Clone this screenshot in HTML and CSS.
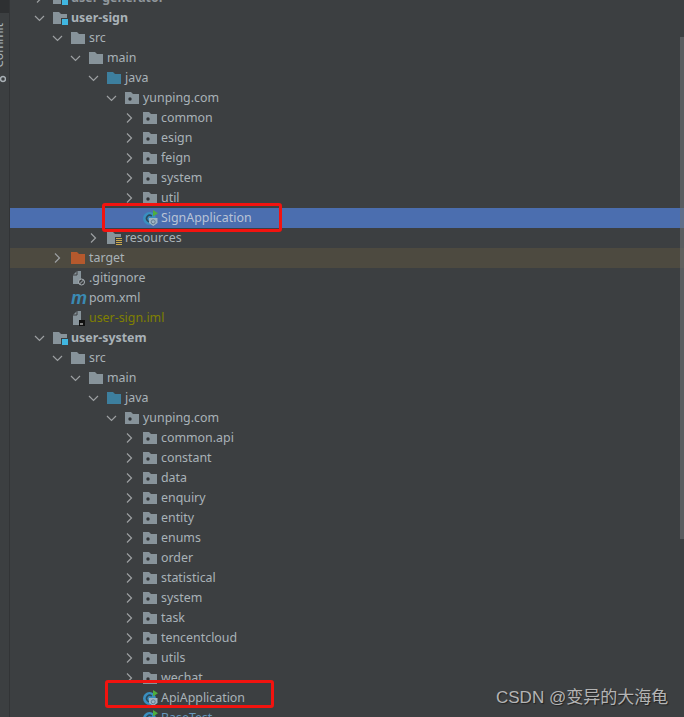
FILE: index.html
```html
<!DOCTYPE html>
<html lang="en">
<head>
<meta charset="utf-8">
<title>Project tree</title>
<link rel="stylesheet" href="styles.css">
</head>
<body>
<svg class="defs" width="0" height="0" aria-hidden="true">
  <symbol id="down" viewBox="0 0 16 16"><path d="M4 6l4.500 4.500L13 6" fill="none" stroke="#9da0a2" stroke-width="1.200"/></symbol>
  <symbol id="right" viewBox="0 0 16 16"><path d="M6 3.500l4.500 4.500L6 12.500" fill="none" stroke="#9da0a2" stroke-width="1.200"/></symbol>
  <symbol id="folder" viewBox="0 0 16 16"><path d="M0 2h6l2 2h6v10H0z" fill="#87939a"/></symbol>
  <symbol id="module" viewBox="0 0 16 16"><path d="M0 2h6l2 2h6v10H0z" fill="#87939a"/><rect x="8" y="8" width="8" height="8" fill="#3c3f41"/><rect x="9" y="9" width="6" height="6" fill="#40b6e0"/></symbol>
  <symbol id="src" viewBox="0 0 16 16"><path d="M0 2h6l2 2h6v10H0z" fill="#3d7f9e"/></symbol>
  <symbol id="target" viewBox="0 0 16 16"><path d="M0 2h6l2 2h6v10H0z" fill="#b5592d"/></symbol>
  <symbol id="pkg" viewBox="0 0 16 16"><path d="M0 2h6l2 2h6v10H0z" fill="#87939a"/><circle cx="5" cy="9" r="1.700" fill="#2f3336"/></symbol>
  <symbol id="res" viewBox="0 0 16 16"><path d="M0 2h6l2 2h6v10H0z" fill="#87939a"/><rect x="8" y="7" width="8" height="9" fill="#3c3f41"/><path d="M9 8.500h6M9 10.500h6M9 12.500h6M9 14.500h6" stroke="#c9a94f" stroke-width="1"/></symbol>
  <symbol id="cls" viewBox="0 0 16 16"><circle cx="6.500" cy="8.500" r="6.500" fill="#3a8fc0"/><path d="M8.800 6A3.200 3.200 0 1 0 8.800 11" fill="none" stroke="#2b4a5c" stroke-width="1.600"/><path d="M10 0l5 3.300L10 6.500z" fill="#4fae3f"/><path d="M6 8h8.500v5l-4.250 3L6 13z" fill="#9fb4c4"/><circle cx="10.200" cy="11.800" r="2" fill="none" stroke="#5f7b90" stroke-width="1"/></symbol>
  <symbol id="ignored" viewBox="0 0 16 16"><path d="M2 5l4-4h4v10l-2 3H2z" fill="#87939a"/><path d="M2 5h4V1" fill="none" stroke="#3c3f41"/><circle cx="10.500" cy="12" r="3" fill="#3c3f41" stroke="#a9b0b5" stroke-width="1"/><path d="M8.500 14l4-4" stroke="#a9b0b5"/></symbol>
  <symbol id="iml" viewBox="0 0 16 16"><path d="M2 5l4-4h4v14H2z" fill="#87939a"/><path d="M2 5h4V1" fill="none" stroke="#3c3f41"/><rect x="8" y="10" width="6" height="6" fill="#111"/><rect x="9" y="13.500" width="3" height="1" fill="#eee"/></symbol>
</svg>

<div class="window">
  <aside class="rail">
    <div class="rail-top"></div>
    <div class="rail-tab">
      <span class="rail-label">Commit</span>
      <svg class="rail-icon" width="10" height="10" viewBox="0 0 10 10"><circle cx="3" cy="5" r="2.500" fill="none" stroke="#a9b0b5" stroke-width="1.500"/><path d="M5.500 5H10" stroke="#a9b0b5" stroke-width="1.500"/></svg>
    </div>
  </aside>

  <main class="tree">
    <div class="row l0"><svg class="chev"><use href="#right"/></svg><svg class="ico"><use href="#module"/></svg><span class="name bold dim">user-generator</span></div>
    <div class="row l0"><svg class="chev"><use href="#down"/></svg><svg class="ico"><use href="#module"/></svg><span class="name bold">user-sign</span></div>
    <div class="row l1"><svg class="chev"><use href="#down"/></svg><svg class="ico"><use href="#folder"/></svg><span class="name">src</span></div>
    <div class="row l2"><svg class="chev"><use href="#down"/></svg><svg class="ico"><use href="#folder"/></svg><span class="name">main</span></div>
    <div class="row l3"><svg class="chev"><use href="#down"/></svg><svg class="ico"><use href="#src"/></svg><span class="name">java</span></div>
    <div class="row l4"><svg class="chev"><use href="#down"/></svg><svg class="ico"><use href="#pkg"/></svg><span class="name">yunping.com</span></div>
    <div class="row l5"><svg class="chev"><use href="#right"/></svg><svg class="ico"><use href="#pkg"/></svg><span class="name">common</span></div>
    <div class="row l5"><svg class="chev"><use href="#right"/></svg><svg class="ico"><use href="#pkg"/></svg><span class="name">esign</span></div>
    <div class="row l5"><svg class="chev"><use href="#right"/></svg><svg class="ico"><use href="#pkg"/></svg><span class="name">feign</span></div>
    <div class="row l5"><svg class="chev"><use href="#right"/></svg><svg class="ico"><use href="#pkg"/></svg><span class="name">system</span></div>
    <div class="row l5"><svg class="chev"><use href="#right"/></svg><svg class="ico"><use href="#pkg"/></svg><span class="name">util</span></div>
    <div class="row l5 selected"><span class="chev"></span><svg class="ico"><use href="#cls"/></svg><span class="name">SignApplication</span></div>
    <div class="row l3"><svg class="chev"><use href="#right"/></svg><svg class="ico"><use href="#res"/></svg><span class="name">resources</span></div>
    <div class="row l1 excluded"><svg class="chev"><use href="#right"/></svg><svg class="ico"><use href="#target"/></svg><span class="name">target</span></div>
    <div class="row l1"><span class="chev"></span><svg class="ico"><use href="#ignored"/></svg><span class="name">.gitignore</span></div>
    <div class="row l1"><span class="chev"></span><span class="ico maven">m</span><span class="name">pom.xml</span></div>
    <div class="row l1"><span class="chev"></span><svg class="ico"><use href="#iml"/></svg><span class="name olive">user-sign.iml</span></div>
    <div class="row l0"><svg class="chev"><use href="#down"/></svg><svg class="ico"><use href="#module"/></svg><span class="name bold">user-system</span></div>
    <div class="row l1"><svg class="chev"><use href="#down"/></svg><svg class="ico"><use href="#folder"/></svg><span class="name">src</span></div>
    <div class="row l2"><svg class="chev"><use href="#down"/></svg><svg class="ico"><use href="#folder"/></svg><span class="name">main</span></div>
    <div class="row l3"><svg class="chev"><use href="#down"/></svg><svg class="ico"><use href="#src"/></svg><span class="name">java</span></div>
    <div class="row l4"><svg class="chev"><use href="#down"/></svg><svg class="ico"><use href="#pkg"/></svg><span class="name">yunping.com</span></div>
    <div class="row l5"><svg class="chev"><use href="#right"/></svg><svg class="ico"><use href="#pkg"/></svg><span class="name">common.api</span></div>
    <div class="row l5"><svg class="chev"><use href="#right"/></svg><svg class="ico"><use href="#pkg"/></svg><span class="name">constant</span></div>
    <div class="row l5"><svg class="chev"><use href="#right"/></svg><svg class="ico"><use href="#pkg"/></svg><span class="name">data</span></div>
    <div class="row l5"><svg class="chev"><use href="#right"/></svg><svg class="ico"><use href="#pkg"/></svg><span class="name">enquiry</span></div>
    <div class="row l5"><svg class="chev"><use href="#right"/></svg><svg class="ico"><use href="#pkg"/></svg><span class="name">entity</span></div>
    <div class="row l5"><svg class="chev"><use href="#right"/></svg><svg class="ico"><use href="#pkg"/></svg><span class="name">enums</span></div>
    <div class="row l5"><svg class="chev"><use href="#right"/></svg><svg class="ico"><use href="#pkg"/></svg><span class="name">order</span></div>
    <div class="row l5"><svg class="chev"><use href="#right"/></svg><svg class="ico"><use href="#pkg"/></svg><span class="name">statistical</span></div>
    <div class="row l5"><svg class="chev"><use href="#right"/></svg><svg class="ico"><use href="#pkg"/></svg><span class="name">system</span></div>
    <div class="row l5"><svg class="chev"><use href="#right"/></svg><svg class="ico"><use href="#pkg"/></svg><span class="name">task</span></div>
    <div class="row l5"><svg class="chev"><use href="#right"/></svg><svg class="ico"><use href="#pkg"/></svg><span class="name">tencentcloud</span></div>
    <div class="row l5"><svg class="chev"><use href="#right"/></svg><svg class="ico"><use href="#pkg"/></svg><span class="name">utils</span></div>
    <div class="row l5"><svg class="chev"><use href="#right"/></svg><svg class="ico"><use href="#pkg"/></svg><span class="name">wechat</span></div>
    <div class="row l5"><span class="chev"></span><svg class="ico"><use href="#cls"/></svg><span class="name">ApiApplication</span></div>
    <div class="row l5"><span class="chev"></span><svg class="ico"><use href="#cls"/></svg><span class="name blue">BaseTest</span></div>
  </main>

  <div class="scrollbar"></div>
  <div class="mark mark-sign"></div>
  <div class="mark mark-api"></div>
  <div class="watermark">CSDN @变异的大海龟</div>
</div>
</body>
</html>
```

FILE: styles.css
```css
html, body {
  margin: 0;
  padding: 0;
  height: 100%;
  overflow: hidden;
  background: #3c3f41;
}

.defs {
  position: absolute;
}

.window {
  position: relative;
  display: flex;
  width: 684px;
  height: 717px;
  overflow: hidden;
  background: #3c3f41;
  font-family: "Noto Sans", "Open Sans", sans-serif;
  font-size: 12.4px;
  color: #a9b2b8;
}

.rail {
  position: relative;
  flex: none;
  width: 9px;
  border-right: 1px solid #323436;
  overflow: hidden;
}

.rail-top {
  height: 13px;
  background: #2e3032;
}

.rail-tab {
  display: flex;
  flex-direction: column;
  gap: 6px;
  width: 9px;
  padding-top: 10px;
}

.rail-label {
  writing-mode: vertical-rl;
  transform: rotate(180deg);
  font-size: 12px;
  line-height: 12px;
  width: 12px;
  margin-left: -7px;
  color: #a9b2b8;
}

.rail-icon {
  flex: none;
  margin-left: -4px;
  transform: rotate(180deg);
}

.tree {
  flex: 1;
  min-width: 0;
  margin-top: -12px;
}

.row {
  display: flex;
  align-items: center;
  height: 20px;
  white-space: nowrap;
}

.l0 { padding-left: 21px; }
.l1 { padding-left: 39px; }
.l2 { padding-left: 57px; }
.l3 { padding-left: 75px; }
.l4 { padding-left: 93px; }
.l5 { padding-left: 111px; }

.chev {
  flex: none;
  display: block;
  width: 16px;
  height: 16px;
  margin-right: 6px;
}

.ico {
  flex: none;
  display: block;
  width: 16px;
  height: 16px;
  margin-right: 2px;
}

.name {
  line-height: 18px;
}

.bold { font-weight: 700; }
.dim { color: #8f969b; }
.olive { color: #808000; }
.blue { color: #6897bb; }

.selected {
  background: #4b6eaf;
  color: #b9c3d6;
}

.excluded {
  background: #4d4a40;
}

.maven {
  font-family: "Liberation Sans", sans-serif;
  font-size: 18px;
  font-weight: 700;
  font-style: italic;
  line-height: 16px;
  color: #3a8ab3;
}

.scrollbar {
  position: absolute;
  top: 37px;
  right: 0;
  width: 4px;
  height: 502px;
  background: rgba(110, 112, 115, 0.6);
}

.mark {
  position: absolute;
  box-sizing: border-box;
  border: 3px solid #f2130f;
  border-radius: 3px;
}

.mark-sign {
  left: 102px;
  top: 203px;
  width: 180px;
  height: 29px;
}

.mark-api {
  left: 105px;
  top: 680px;
  width: 169px;
  height: 28px;
}

.watermark {
  position: absolute;
  left: 496px;
  top: 687px;
  font-family: "Liberation Sans", "Noto Sans CJK SC", sans-serif;
  font-size: 17px;
  line-height: 22px;
  white-space: nowrap;
  color: #b4b4b4;
  text-shadow: 1px 1px 1px #222;
}
```
